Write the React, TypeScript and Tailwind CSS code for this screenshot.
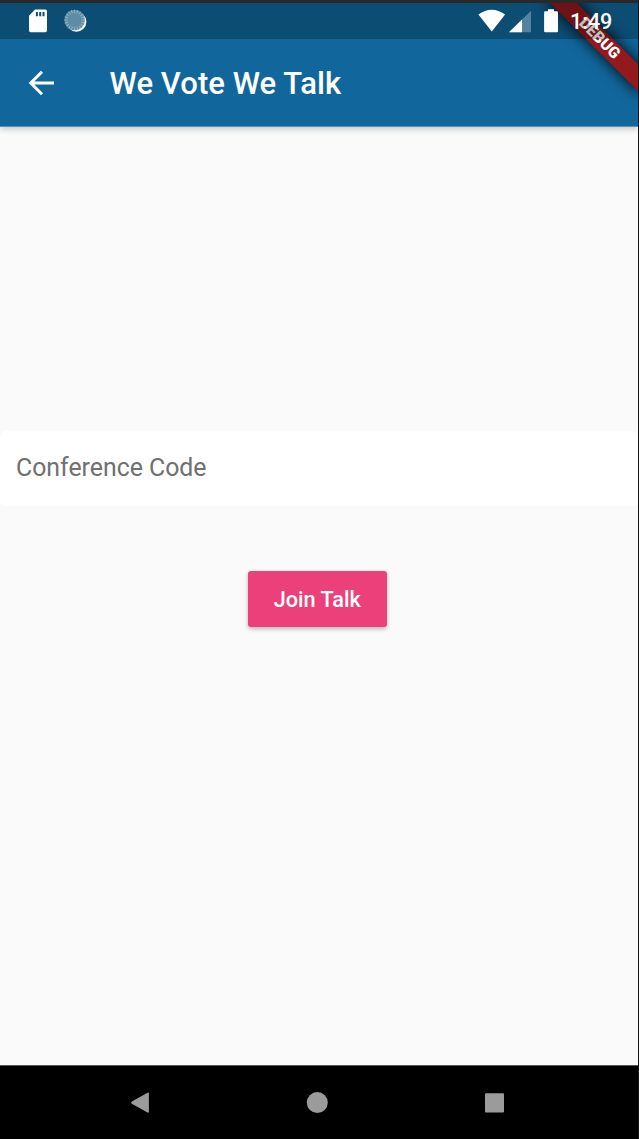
import React from "react";

function StatusBar() {
  const ticks = Array.from({ length: 20 }, (_, i) => i * 18);
  return (
    <div className="relative z-20 flex h-9 w-full bg-black/25 pt-px">
      <svg width="638" height="36" viewBox="0 3 638 36" fill="#fff" className="absolute top-0 left-0">
        <path
          fillRule="evenodd"
          d="M35 9.500h10.300a1.700 1.700 0 0 1 1.700 1.700v19.400a1.700 1.700 0 0 1-1.700 1.700H30.700A1.700 1.700 0 0 1 29 30.600V15.700zM35.900 12v4.300h2V12zm3.300 0v4.300h2V12zm3.300 0v4.300h2V12z"
        />
        <circle cx="76.400" cy="21.800" r="10" />
        <circle cx="74.600" cy="20" r="10.300" fill="#5e8ba5" />
        <g stroke="#b4c9d5" strokeWidth="0.700">
          {ticks.map((a) => (
            <path key={a} d="M74.600 9.700v3.200" transform={`rotate(${a} 74.600 20)`} />
          ))}
        </g>
        <path d="M478.400 14.600Q491.700 4.800 505.100 14.600L491.800 31.500z" />
        <path d="M531 10.800V32.300H509z" fillOpacity="0.300" />
        <path d="M522 19.600V32.300H509z" />
        <path d="M548 9.200h6v2h2.800q1.200 0 1.200 1.200v18.700q0 1.200-1.200 1.200h-11.500q-1.200 0-1.200-1.200V12.400q0-1.200 1.200-1.200H548z" />
      </svg>
      <span className="ml-[570px] text-[21.500px] leading-[36px] font-medium text-white">1:49</span>
    </div>
  );
}

function DebugBanner() {
  return (
    <div className="pointer-events-none absolute inset-0 z-10 overflow-hidden">
      <div className="absolute top-[27.300px] left-[537px] flex h-[18.700px] w-[126px] rotate-45 items-center justify-center bg-[#93191d] pr-[2px] text-[15.800px] leading-none font-black text-white shadow-[0_0_14px_2px_rgba(0,0,0,0.75)]">
        DEBUG
      </div>
    </div>
  );
}

export default function App() {
  return (
    <div className="flex h-[1139px] w-[639px] flex-col overflow-hidden border-t-3 border-r border-t-[#292929] border-r-[#141414] bg-[#fafafa] font-['Roboto',sans-serif]">
      <header className="relative z-10 h-[124px] shrink-0 border-b border-[#5b93b6] bg-[#11679b] shadow-[0_2px_6px_rgba(0,0,0,0.22)]">
        <DebugBanner />
        <StatusBar />
        <div className="flex h-[87px] items-center pl-[27.500px]">
          <button aria-label="Back" className="mr-[55px] text-white">
            <svg width="27" height="26" viewBox="0 0 27 26" fill="none" stroke="currentColor" strokeWidth="3">
              <path d="M26 13H3M14 1.800 2.800 13 14 24.200" />
            </svg>
          </button>
          <h1 className="pt-[2px] text-[31px] leading-none font-medium tracking-[0.070px] whitespace-nowrap text-white">
            We Vote We Talk
          </h1>
        </div>
      </header>

      <main className="flex flex-1 flex-col items-center">
        <input
          aria-label="Conference Code"
          placeholder="Conference Code"
          className="mt-[304px] h-[75px] w-full shrink-0 rounded-md bg-white px-4 pb-[3px] text-[24.850px] text-[#707070] outline-none placeholder:text-[#707070] placeholder:opacity-100"
        />
        <button className="mt-[65px] mr-[3.500px] flex h-[56px] w-[138.500px] items-center justify-center rounded-[3px] bg-[#ec407a] pt-px text-[21.700px] leading-none font-medium whitespace-nowrap text-white shadow-[0_2px_4px_rgba(0,0,0,0.27)]">
          Join Talk
        </button>
      </main>

      <nav className="h-[74px] shrink-0 border-t border-[#555] bg-black">
        <svg width="638" height="73" viewBox="0 1066 638 73" fill="#9b9b9b">
          <path d="M131.800 1101.600 147.500 1092.700q1.400-.6 1.400.9v18q0 1.500-1.400.9L131.800 1103.800q-1.500-1.100 0-2.200z" />
          <circle cx="317.300" cy="1102.600" r="10.500" />
          <rect x="485" y="1093.200" width="19" height="19.300" rx="1" />
        </svg>
      </nav>
    </div>
  );
}
